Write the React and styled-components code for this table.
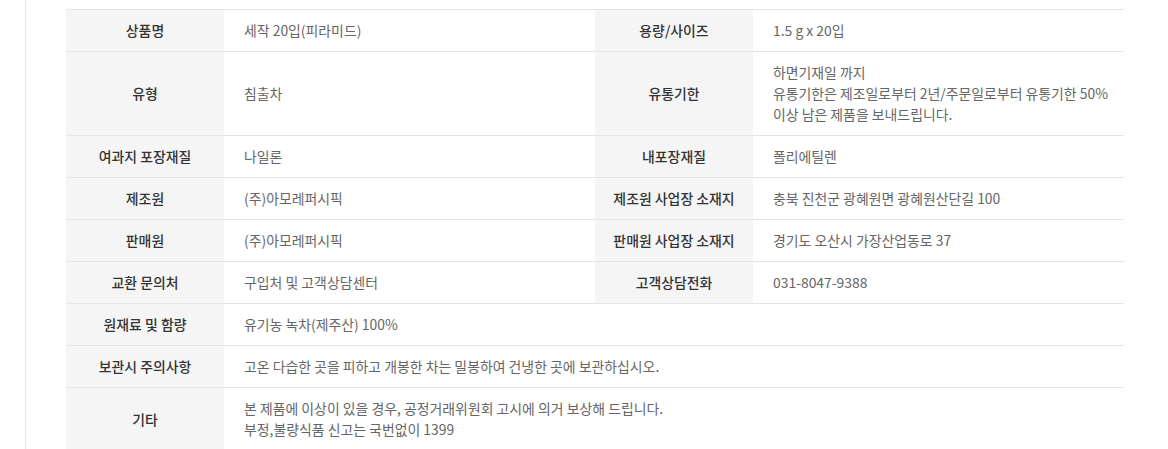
import styled, { createGlobalStyle } from 'styled-components';

const GlobalStyle = createGlobalStyle`
  body {
    margin: 0;
    background: #fff;
    font-family: "Noto Sans CJK KR", "Noto Sans", sans-serif;
  }
`;

const Frame = styled.div`
  margin-left: 25px;
  width: 1117px;
  min-height: 449px;
  border-left: 1px solid #e6e6e6;
  border-right: 1px solid #e6e6e6;
  padding: 9px 19px 0 40px;
  box-sizing: content-box;
`;

const InfoTable = styled.table`
  width: 1058px;
  border-collapse: collapse;
  table-layout: fixed;
  border-top: 1px solid #e5e5e5;
  font-size: 13.9px;
  line-height: 21px;
`;

const Row = styled.tr`
  border-bottom: 1px solid #e5e5e5;
`;

const Head = styled.th`
  padding: 10px 8px;
  background: #f5f5f5;
  color: #333;
  font-weight: 500;
  text-align: center;
  vertical-align: middle;
  box-sizing: border-box;
`;

const Value = styled.td`
  padding: 10px 8px 10px 20px;
  color: #666;
  font-weight: 400;
  text-align: left;
  vertical-align: middle;
  box-sizing: border-box;
`;

const pairs = [
  [['상품명', '세작 20입(피라미드)'], ['용량/사이즈', '1.5 g x 20입']],
  [['유형', '침출차'], ['유통기한', ['하면기재일 까지', '유통기한은 제조일로부터 2년/주문일로부터 유통기한 50%', '이상 남은 제품을 보내드립니다.']]],
  [['여과지 포장재질', '나일론'], ['내포장재질', '폴리에틸렌']],
  [['제조원', '(주)아모레퍼시픽'], ['제조원 사업장 소재지', '충북 진천군 광혜원면 광혜원산단길 100']],
  [['판매원', '(주)아모레퍼시픽'], ['판매원 사업장 소재지', '경기도 오산시 가장산업동로 37']],
  [['교환 문의처', '구입처 및 고객상담센터'], ['고객상담전화', '031-8047-9388']],
];

const wide = [
  ['원재료 및 함량', '유기농 녹차(제주산) 100%'],
  ['보관시 주의사항', '고온 다습한 곳을 피하고 개봉한 차는 밀봉하여 건냉한 곳에 보관하십시오.'],
  ['기타', ['본 제품에 이상이 있을 경우, 공정거래위원회 고시에 의거 보상해 드립니다.', '부정,불량식품 신고는 국번없이 1399']],
];

const Lines = ({ text }) =>
  Array.isArray(text)
    ? text.map((line, i) => (
        <span key={i}>
          {line}
          {i < text.length - 1 && <br />}
        </span>
      ))
    : text;

export default function App() {
  return (
    <>
      <GlobalStyle />
      <Frame>
        <InfoTable>
          <colgroup>
            <col style={{ width: 158 }} />
            <col style={{ width: 371 }} />
            <col style={{ width: 158 }} />
            <col style={{ width: 371 }} />
          </colgroup>
          <tbody>
            {pairs.map((pair, i) => (
              <Row key={i}>
                {pair.map(([label, value]) => [
                  <Head key={label + 'h'}>{label}</Head>,
                  <Value key={label + 'v'}><Lines text={value} /></Value>,
                ])}
              </Row>
            ))}
            {wide.map(([label, value]) => (
              <Row key={label}>
                <Head>{label}</Head>
                <Value colSpan={3}><Lines text={value} /></Value>
              </Row>
            ))}
          </tbody>
        </InfoTable>
      </Frame>
    </>
  );
}
